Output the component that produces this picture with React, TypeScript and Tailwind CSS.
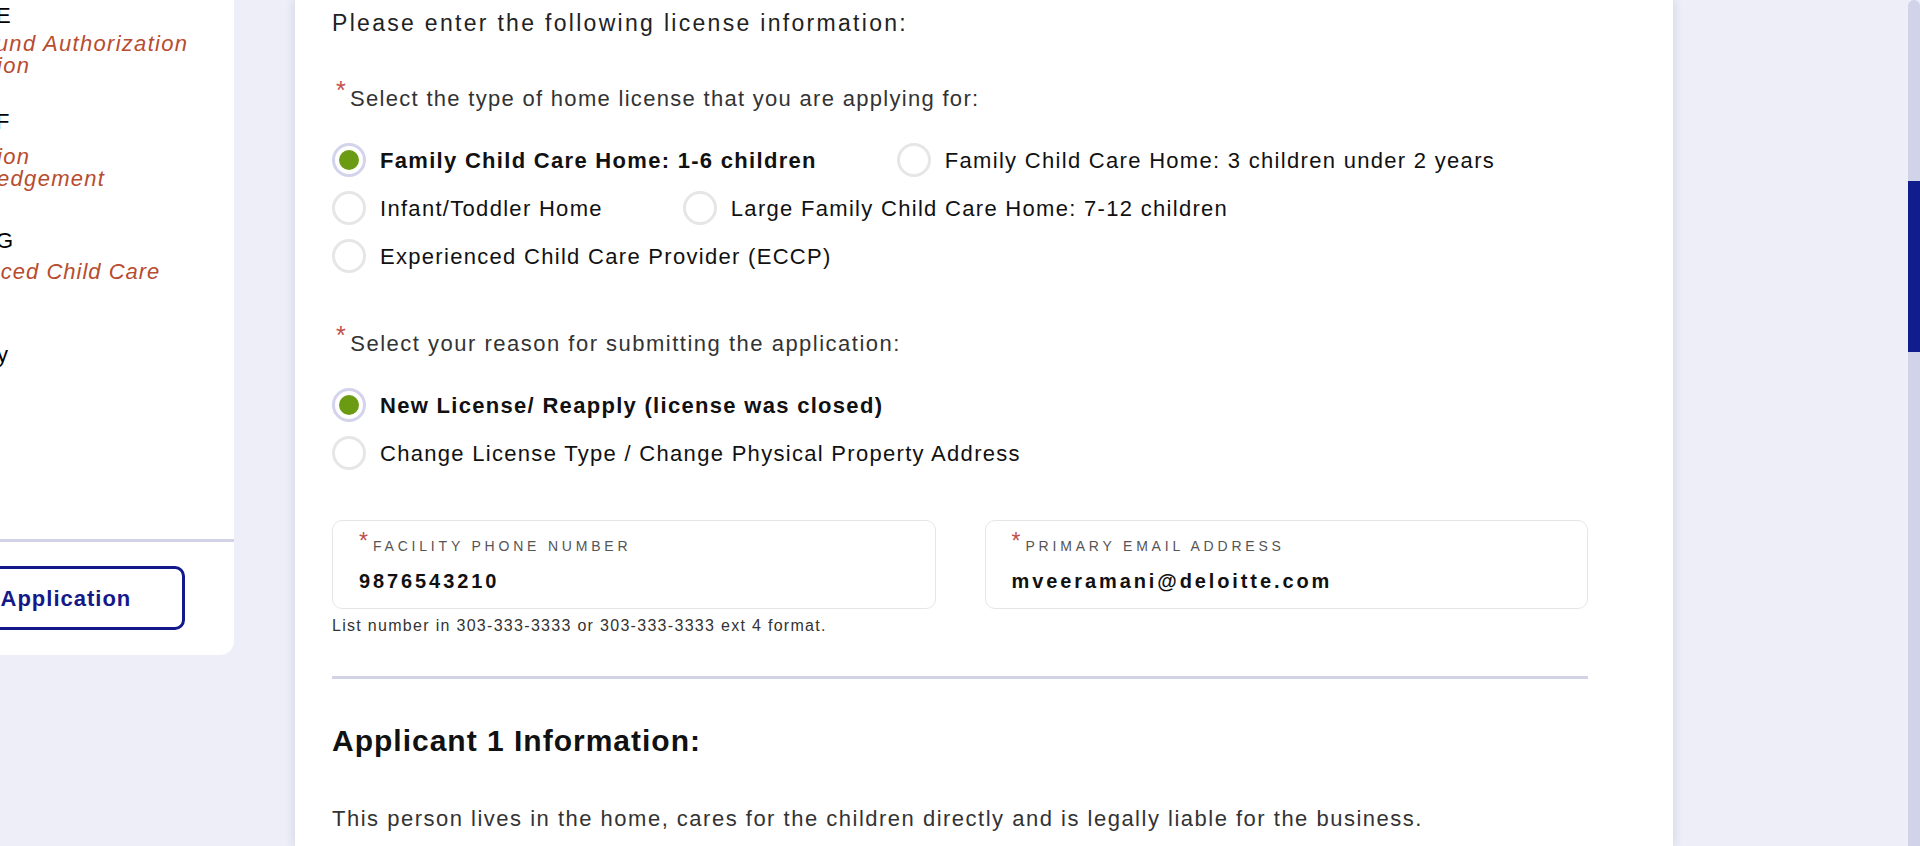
import React from 'react';

const LICENSE_TYPES = [
  { label: 'Family Child Care Home: 1-6 children', checked: true },
  { label: 'Family Child Care Home: 3 children under 2 years' },
  { label: 'Infant/Toddler Home' },
  { label: 'Large Family Child Care Home: 7-12 children' },
  { label: 'Experienced Child Care Provider (ECCP)' },
];

const REASONS = [
  { label: 'New License/ Reapply (license was closed)', checked: true },
  { label: 'Change License Type / Change Physical Property Address' },
];

function Radio({ checked }: { checked?: boolean }) {
  return (
    <span
      className={`flex h-[34px] w-[34px] shrink-0 items-center justify-center rounded-full border-[3px] ${
        checked ? 'border-[#d3d3ec]' : 'border-[#e6e6e6]'
      }`}
    >
      {checked && <span className="h-[20px] w-[20px] rounded-full bg-[#6b9b12]" />}
    </span>
  );
}

function RadioGroup({ options }: { options: { label: string; checked?: boolean }[] }) {
  return (
    <div className="flex flex-wrap gap-x-[80px] gap-y-[14px]">
      {options.map((o) => (
        <label key={o.label} className="flex h-[34px] items-center gap-[14px]">
          <Radio checked={o.checked} />
          <span className={`text-[22px] tracking-[1.3px] text-[#111] ${o.checked ? 'font-bold' : ''}`}>{o.label}</span>
        </label>
      ))}
    </div>
  );
}

function Star() {
  return <span className="inline-block -translate-y-[7px] pl-[4px] pr-[3px] text-[25px] leading-[20px] text-[#c0504d]">*</span>;
}

function Field({ label, value }: { label: string; value: string }) {
  return (
    <div className="h-[89px] flex-1 rounded-[10px] border border-[#e6e6e6] px-[26px] pt-[11px]">
      <div className="flex items-start leading-[18px]">
        <span className="pr-[5px] text-[23px] leading-[18px] text-[#c0504d]">*</span>
        <span className="mt-[5px] text-[14px] tracking-[3.8px] text-[#555]">{label}</span>
      </div>
      <div className="mt-[13px] text-[20px] font-bold leading-[26px] tracking-[2.9px] text-[#111]">{value}</div>
    </div>
  );
}

export default function App() {
  return (
    <div className="flex h-[846px] w-[1920px] overflow-hidden bg-[#eeeef8] font-['Liberation_Sans',Arial,sans-serif]">
      <div className="flex flex-1 items-start">
        {/* Left step navigation */}
        <aside className="-ml-[160px] flex h-[655px] w-[394px] shrink-0 flex-col rounded-br-[14px] bg-white">
          <nav className="flex-1 pl-[66px] pr-[31px] pt-[5px] text-[22px] leading-[22px] tracking-[1.3px]">
            <div className="text-black">Section E</div>
            <div className="mt-[6px] italic text-[#b84c2e]">Background Authorization Information</div>

            <div className="mt-[34px] text-black">Section F</div>
            <div className="mt-[13px] italic text-[#b84c2e]">Information Acknowledgement</div>

            <div className="mt-[40px] text-black">Section G</div>
            <div className="mt-[9px] italic tracking-[1px] text-[#b84c2e]">Experienced Child Care</div>

            <div className="mt-[61px] text-black">Summary</div>
          </nav>
          <div className="h-[3px] bg-[#d3d3e8]" />
          <div className="pb-[25px] pl-[20px] pr-[49px] pt-[24px]">
            <button className="flex h-[64px] w-full items-center justify-center rounded-[10px] border-[3px] border-[#14198a] text-[22px] font-bold tracking-[1px] text-[#14198a]">
              Submit Application
            </button>
          </div>
        </aside>

        {/* Main form card */}
        <main className="ml-[61px] w-[1378px] self-stretch bg-white pl-[37px] shadow-[0_0_10px_rgba(40,40,90,0.15)]">
          <div className="w-[1256px] text-[#222]">
            <p className="mt-[8px] text-[23px] leading-[30px] tracking-[2.3px]">Please enter the following license information:</p>

            <p className="mt-[46px] text-[22px] leading-[30px] tracking-[1.3px] text-[#333]">
              <Star />
              Select the type of home license that you are applying for:
            </p>
            <div className="mt-[29px]">
              <RadioGroup options={LICENSE_TYPES} />
            </div>

            <p className="mt-[56px] text-[22px] leading-[30px] tracking-[1.5px] text-[#333]">
              <Star />
              Select your reason for submitting the application:
            </p>
            <div className="mt-[29px]">
              <RadioGroup options={REASONS} />
            </div>

            <div className="mt-[50px] flex gap-[49px]">
              <Field label="FACILITY PHONE NUMBER" value="9876543210" />
              <Field label="PRIMARY EMAIL ADDRESS" value="mveeramani@deloitte.com" />
            </div>
            <p className="mt-[7px] text-[16px] leading-[20px] tracking-[1.3px] text-[#333]">
              List number in 303-333-3333 or 303-333-3333 ext 4 format.
            </p>

            <div className="mt-[40px] h-[3px] bg-[#d3d3e8]" />

            <h2 className="mt-[42px] text-[30px] font-bold leading-[40px] tracking-[1px] text-[#111]">Applicant 1 Information:</h2>
            <p className="mt-[43px] text-[22px] leading-[30px] tracking-[1.5px] text-[#333]">
              This person lives in the home, cares for the children directly and is legally liable for the business.
            </p>
          </div>
        </main>
      </div>

      {/* Scrollbar */}
      <div className="flex w-[12px] flex-col rounded-t-[6px] bg-[#d1d3e9]">
        <div className="h-[181px]" />
        <div className="h-[171px] bg-[#0f1e8c]" />
      </div>
    </div>
  );
}
